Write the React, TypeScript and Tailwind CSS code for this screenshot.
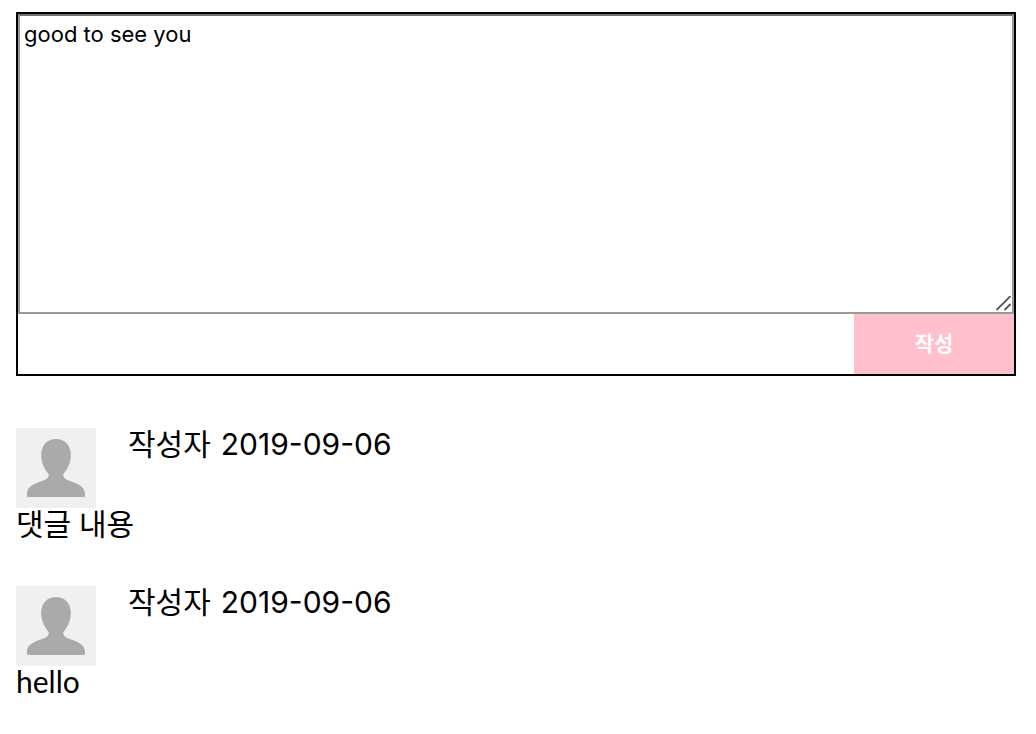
const comments = [
  { id: 1, author: '작성자', date: '2019-09-06', body: '댓글 내용' },
  { id: 2, author: '작성자', date: '2019-09-06', body: 'hello' },
];

function Avatar() {
  return (
    <svg viewBox="0 0 80 80" className="size-20 shrink-0" role="img" aria-label="프로필">
      <rect width="80" height="80" fill="#f0f0f0" />
      <path
        d="M40 11C49 11 54.8 17.500 54.8 27C54.8 35 51.5 41 47.5 46Q46.500 48 48.500 50C54 55 69 55 69 66V68Q69 69 68 69H12Q11 69 11 68V66C11 55 26 55 31.500 50Q33.500 48 32.500 46C28.500 41 25.200 35 25.200 27C25.200 17.500 31 11 40 11Z"
        fill="#aaaaa8"
      />
    </svg>
  );
}

export default function App() {
  return (
    <main className="min-h-screen bg-white px-4 pt-3 pr-5 font-['Lato','Noto_Sans_CJK_KR',sans-serif] text-black">
      <form className="border-2 border-black" onSubmit={(e) => e.preventDefault()}>
        <div className="relative">
          <textarea
            aria-label="댓글"
            defaultValue="good to see you"
            className="block h-75 w-full resize-none border-2 border-[#999999] border-t-[#707070] p-1 font-['Inter','Noto_Sans_CJK_KR',sans-serif] text-[22px] leading-7 outline-none"
          />
          <svg viewBox="0 0 16 16" className="pointer-events-none absolute right-0.5 bottom-0.5 size-4" aria-hidden="true">
            <path d="M0.500 14L14.500 0M8.500 14L14.500 8" stroke="#555" strokeWidth="1.800" fill="none" />
          </svg>
        </div>
        <div className="flex justify-end">
          <button type="submit" className="h-15 w-40 bg-[#ffc0cb] pb-0.5 text-[21px] font-bold text-white">
            작성
          </button>
        </div>
      </form>
      <ul className="mt-13 flex flex-col gap-12">
        {comments.map((c) => (
          <li key={c.id}>
            <div className="flex gap-8">
              <Avatar />
              <p className="flex gap-2.5 text-3xl leading-[30px]">
                <span>{c.author}</span>
                <time dateTime={c.date} className="font-['Inter',sans-serif] leading-8">
                  {c.date}
                </time>
              </p>
            </div>
            <p className="text-3xl leading-[30px]">{c.body}</p>
          </li>
        ))}
      </ul>
    </main>
  );
}
